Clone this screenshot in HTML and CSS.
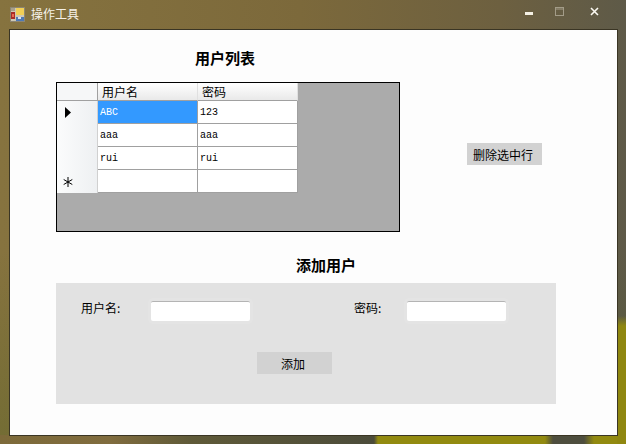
FILE: index.html
```html
<!DOCTYPE html>
<html lang="zh">
<head>
    <meta charset="UTF-8">
    <title>操作工具</title>
    <link rel="stylesheet" href="styles.css">
</head>
<body>
<header class="titlebar">
    <svg class="app-icon" width="16" height="16" viewBox="0 0 16 16">
        <rect x="0.5" y="0.5" width="14" height="14" fill="#cfc8b4" stroke="#8d8672"/>
        <rect x="1" y="1" width="4" height="3" fill="#a8a08c"/>
        <rect x="6" y="1" width="8" height="7" fill="#f2cf55"/>
        <rect x="1" y="5" width="4" height="7" fill="#a92c28"/>
        <rect x="2" y="7" width="2" height="3" fill="#e86a50"/>
        <rect x="6" y="10" width="8" height="4" fill="#4f79b5"/>
        <rect x="8" y="10" width="3" height="2" fill="#d9e2ee"/>
    </svg>
    <span class="app-title">操作工具</span>
    <div class="win-buttons">
        <svg width="8" height="3" viewBox="0 0 8 3"><rect width="8" height="3" fill="#f4f0e4"/></svg>
        <svg class="win-max" width="9" height="9" viewBox="0 0 9 9"><rect x="0.5" y="0.5" width="8" height="8" fill="none" stroke="#a39c88"/><line x1="0" y1="2" x2="9" y2="2" stroke="#a39c88"/></svg>
        <svg class="win-close" width="9" height="9" viewBox="0 0 9 9"><path d="M1 1L8 8M8 1L1 8" stroke="#fbf9f2" stroke-width="1.6" fill="none"/></svg>
    </div>
</header>

<main class="client">
    <h2 class="list-title">用户列表</h2>
    <div class="list-row">
        <div class="grid-view">
            <div class="grid-table">
                <div class="cell corner"></div>
                <div class="cell head">用户名</div>
                <div class="cell head">密码</div>

                <div class="cell row-head">
                    <svg width="6" height="11" viewBox="0 0 6 11"><path d="M0 0L6 5.5L0 11Z" fill="#000"/></svg>
                </div>
                <div class="cell data selected">ABC</div>
                <div class="cell data">123</div>

                <div class="cell row-head"></div>
                <div class="cell data">aaa</div>
                <div class="cell data">aaa</div>

                <div class="cell row-head"></div>
                <div class="cell data">rui</div>
                <div class="cell data">rui</div>

                <div class="cell row-head">
                    <svg width="10" height="10" viewBox="0 0 10 10"><path d="M5 0V10M0.7 2.5L9.3 7.5M9.3 2.5L0.7 7.5" stroke="#000" stroke-width="1" fill="none"/></svg>
                </div>
                <div class="cell data"></div>
                <div class="cell data"></div>
            </div>
        </div>
        <button class="btn btn-delete">删除选中行</button>
    </div>

    <h2 class="add-title">添加用户</h2>
    <section class="add-panel">
        <div class="add-fields">
            <label class="lbl-user" for="username">用户名:</label>
            <input class="field" type="text" id="username">
            <label class="lbl-pass" for="password">密码:</label>
            <input class="field" type="text" id="password">
        </div>
        <button class="btn btn-add">添加</button>
    </section>
</main>
</body>
</html>
```

FILE: styles.css
```css
* {
    box-sizing: border-box;
}
html, body {
    margin: 0;
    padding: 0;
}
body {
    width: 626px;
    height: 444px;
    overflow: hidden;
    font-family: "Noto Sans CJK SC", "Liberation Sans", sans-serif;
    font-size: 12px;
    color: #000;
    background-color: #7c6a3c;
    background-image:
        linear-gradient(180deg, transparent 316px, #8f8710 326px),
        linear-gradient(90deg, transparent 374px, #928a10 378px, #928a10 545px, #4e4e3e 553px, #4e4e3e 584px, #928a10 594px),
        linear-gradient(90deg, #7d6a3a 0, #806c3e 110px, #5f5a38 190px, #4c4c3a 370px),
        linear-gradient(180deg, rgba(0,0,0,0) 250px, rgba(60,90,20,0.25) 440px),
        linear-gradient(90deg, #86733f 0, #7c693b 300px, #6d6040 500px, #5e5a48 626px);
    background-size: 9px 100%, 100% 9px, 100% 9px, 100% 100%, 100% 100%;
    background-position: right top, left bottom, left bottom, left top, left top;
    background-repeat: no-repeat;
}

/* title bar */
.titlebar {
    display: flex;
    align-items: flex-start;
    height: 29px;
    padding: 6px 0 0 10px;
}
.app-icon {
    margin-top: 1px;
}
.app-title {
    margin-left: 5px;
    line-height: 15px;
    color: #f6f2e8;
}
.win-buttons {
    display: flex;
    align-items: flex-start;
    margin-left: 446px;
}
.win-buttons svg:first-child {
    margin-top: 6px;
}
.win-max {
    margin-left: 22px;
    margin-top: 1px;
}
.win-close {
    margin-left: 26px;
    margin-top: 1px;
}

/* client area */
.client {
    width: 609px;
    height: 407px;
    margin-left: 9px;
    padding-left: 46px;
    background-color: #fdfdfd;
    border: 1px solid #3a3524;
}
.list-title,
.add-title {
    margin: 0;
    font-size: 15px;
    font-weight: bold;
    line-height: 20px;
}
.list-title {
    padding: 18px 0 0 139px;
}
.list-row {
    display: flex;
    align-items: flex-start;
    margin-top: 14px;
}
.grid-view {
    width: 344px;
    height: 150px;
    background-color: #ababab;
    border: 1px solid #000;
}
.grid-table {
    display: grid;
    grid-template-columns: 41px 100px 100px;
    grid-template-rows: 18px 23px 23px 23px 23px;
    width: 241px;
}
.cell {
    display: flex;
    align-items: center;
    border-right: 1px solid #a0a0a0;
    border-bottom: 1px solid #a0a0a0;
}
.corner {
    background-color: #f6f7f8;
}
.head {
    padding-left: 4px;
    font-size: 12px;
    background-image: linear-gradient(180deg, #ffffff, #e9e9e9);
    border-right: 1px solid #e0e0e0;
}
.row-head {
    justify-content: center;
    padding-right: 18px;
    background-image: linear-gradient(90deg, #fbfcfc, #eef0f2);
    border-right-color: #d0d0d0;
    border-bottom: 0;
}
.data {
    padding-left: 2px;
    font-family: "Liberation Mono", monospace;
    font-size: 10px;
    background-color: #fff;
}
.selected {
    color: #fff;
    background-color: #3399ff;
}

/* buttons */
.btn {
    width: 75px;
    height: 22px;
    padding: 0 3px 0 0;
    font-family: inherit;
    font-size: 12px;
    color: #000;
    background-color: #d2d2d2;
    border: 0;
}
.btn-delete {
    margin: 61px 0 0 67px;
}

/* add form */
.add-title {
    margin-top: 23px;
    padding-left: 240px;
}
.add-panel {
    width: 500px;
    height: 121px;
    margin-top: 8px;
    padding: 18px 0 0 25px;
    background-color: #e2e2e2;
}
.add-fields {
    display: flex;
    align-items: flex-start;
}
.add-fields label {
    line-height: 14px;
}
.lbl-user {
    width: 70px;
}
.lbl-pass {
    width: 53px;
    margin-left: 104px;
}
.field {
    width: 99px;
    height: 20px;
    padding: 0;
    background-color: #fff;
    border: 0;
    border-top: 1px solid #b4b4b4;
    border-radius: 2px;
    box-shadow: 0 0 0 3px rgba(255,255,255,0.08);
}
.btn-add {
    display: block;
    margin: 31px 0 0 176px;
}
```
